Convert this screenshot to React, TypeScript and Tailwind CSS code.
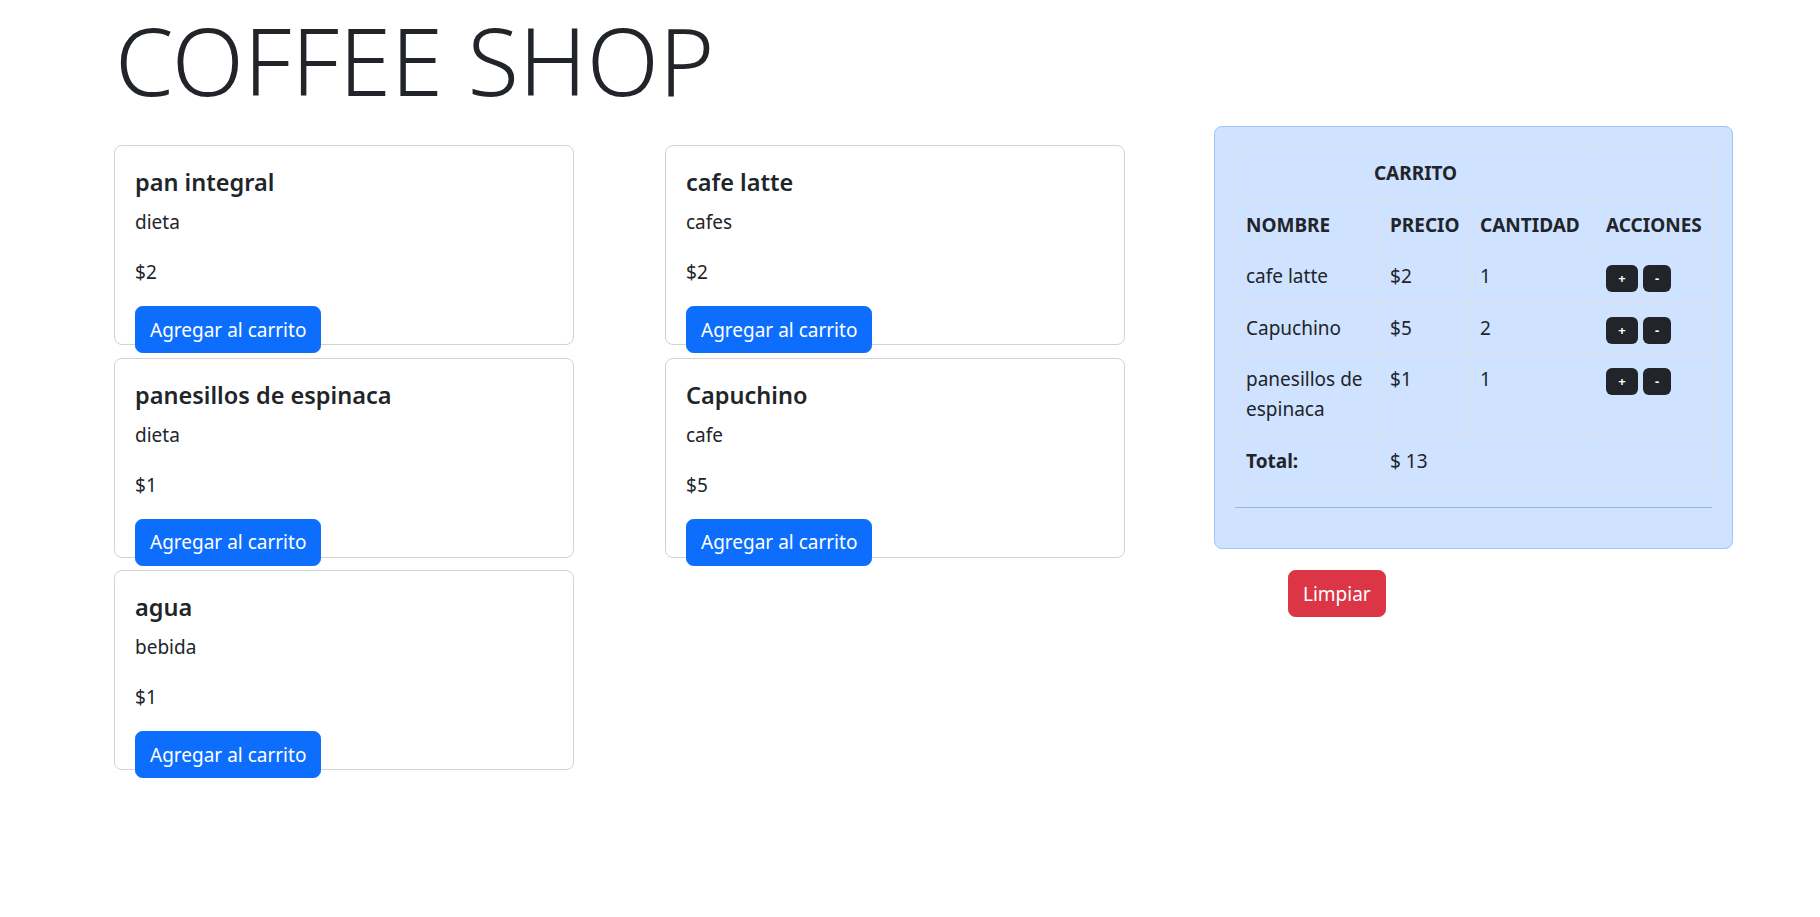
import React from "react";

type Product = { name: string; category: string; price: number };

const leftColumn: Product[] = [
  { name: "pan integral", category: "dieta", price: 2 },
  { name: "panesillos de espinaca", category: "dieta", price: 1 },
  { name: "agua", category: "bebida", price: 1 },
];

const rightColumn: Product[] = [
  { name: "cafe latte", category: "cafes", price: 2 },
  { name: "Capuchino", category: "cafe", price: 5 },
];

const cart = [
  { name: "cafe latte", price: 2, qty: 1 },
  { name: "Capuchino", price: 5, qty: 2 },
  { name: "panesillos de espinaca", price: 1, qty: 1 },
];

const ProductCard: React.FC<{ product: Product }> = ({ product }) => {
  return (
    <div className="h-[200px] rounded-[8px] border border-[#d2d2d2] bg-white p-[20px]">
      <h5 className="mb-[10px] pt-[1px] text-[23.5px] font-semibold leading-[30px]">
        {product.name}
      </h5>
      <p className="mb-[20px] text-[19px] leading-[30px]">{product.category}</p>
      <p className="mb-[19px] text-[19px] leading-[30px]">${product.price}</p>
      <button className="h-[47px] rounded-[7.5px] border border-[#0d6efd] bg-[#0d6efd] px-[14px] text-[19px] leading-[30px] text-white">
        Agregar al carrito
      </button>
    </div>
  );
};

const cell = "border border-[#dee2e6] px-[10px] py-[10.25px] align-top";

const App: React.FC = () => {
  const total = cart.reduce((sum, item) => sum + item.price * item.qty, 0);

  return (
    <div className="flex min-h-screen flex-col bg-white font-['Noto_Sans',sans-serif] text-[#212529]">
      <div className="pl-[114px]">
        <h1 className="-mt-[6px] pl-[1px] text-[94px] font-light leading-[132px]">
          COFFEE SHOP
        </h1>

        <div className="flex items-start">
          <div className="flex w-[460px] flex-col gap-[12.5px] pt-[19px]">
            {leftColumn.map((p) => (
              <ProductCard key={p.name} product={p} />
            ))}
          </div>

          <div className="ml-[91px] flex w-[460px] flex-col gap-[12.5px] pt-[19px]">
            {rightColumn.map((p) => (
              <ProductCard key={p.name} product={p} />
            ))}
          </div>

          <div className="ml-[89px] w-[519px]">
            <div className="rounded-[8px] border border-[#9ec5fe] bg-[#cfe2ff] p-[20px]">
              <table className="w-full table-fixed border-collapse text-[19px] leading-[30px]">
                <colgroup>
                  <col className="w-[144px]" />
                  <col className="w-[90px]" />
                  <col className="w-[126px]" />
                  <col className="w-[118px]" />
                </colgroup>
                <thead>
                  <tr>
                    <th colSpan={3} className={`${cell} text-center font-bold`}>
                      CARRITO
                    </th>
                    <th className={cell}></th>
                  </tr>
                  <tr>
                    <th className={`${cell} text-left font-bold`}>NOMBRE</th>
                    <th className={`${cell} text-left font-bold`}>PRECIO</th>
                    <th className={`${cell} text-left font-bold`}>CANTIDAD</th>
                    <th className={`${cell} text-left font-bold`}>ACCIONES</th>
                  </tr>
                </thead>
                <tbody>
                  {cart.map((item) => (
                    <tr key={item.name}>
                      <td className={cell}>{item.name}</td>
                      <td className={cell}>${item.price}</td>
                      <td className={cell}>{item.qty}</td>
                      <td className={cell}>
                        <div className="flex h-[30px] items-start gap-[5px] pt-[4px]">
                          <button className="flex h-[27px] w-[32px] items-center justify-center rounded-[6px] bg-[#212529] text-[13px] font-bold leading-none text-white">
                            +
                          </button>
                          <button className="flex h-[27px] w-[28px] items-center justify-center rounded-[6px] bg-[#212529] text-[13px] font-bold leading-none text-white">
                            -
                          </button>
                        </div>
                      </td>
                    </tr>
                  ))}
                  <tr>
                    <td className={`${cell} font-bold`}>Total:</td>
                    <td colSpan={3} className={cell}>
                      $ {total}
                    </td>
                  </tr>
                </tbody>
              </table>
              <hr className="mt-[20px] mb-[20px] border-t border-[#9db5d9]" />
            </div>

            <button className="ml-[74px] mt-[21px] h-[47px] rounded-[7.5px] border border-[#dc3545] bg-[#dc3545] px-[14px] text-[19px] leading-[30px] text-white">
              Limpiar
            </button>
          </div>
        </div>
      </div>
    </div>
  );
};

export default App;
